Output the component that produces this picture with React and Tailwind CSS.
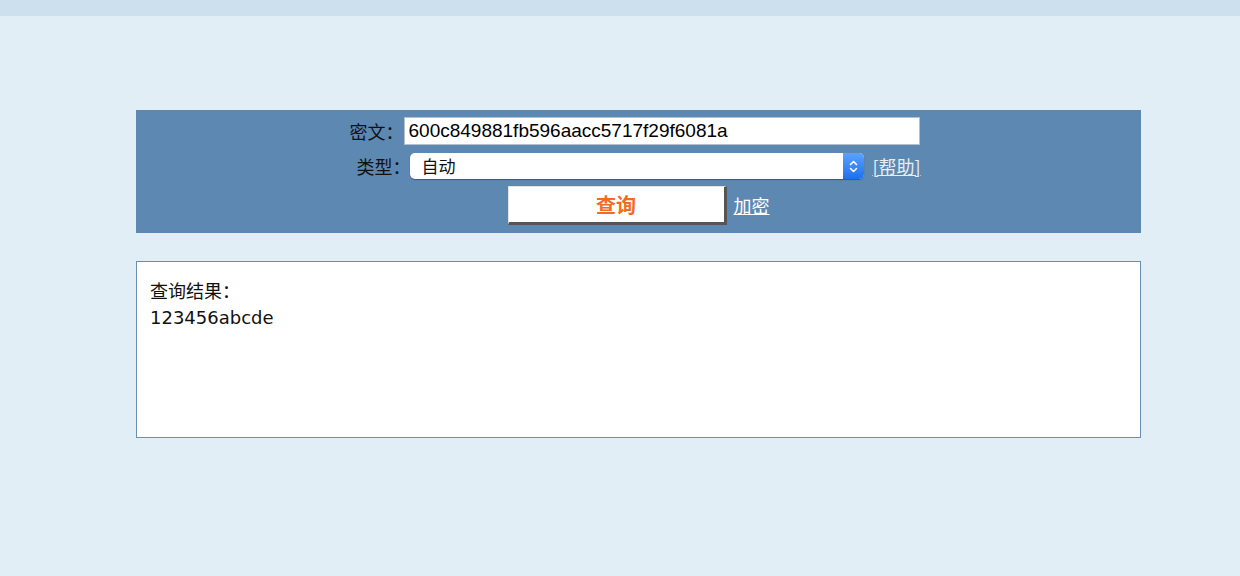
import React, { useState } from "react";

const cjk = "font-['Noto_Sans_CJK_SC',sans-serif]";

export default function App() {
  const [miwen, setMiwen] = useState("600c849881fb596aacc5717f29f6081a");

  return (
    <div className="min-h-[576px] w-full bg-[#e1eef6] font-['Liberation_Sans','Noto_Sans_CJK_SC',sans-serif]">
      <div className="h-4 w-full bg-[#cde0ed]" />

      <div className="ml-[136px] mt-[94px] w-[1005px]">
        {/* formulario */}
        <div className="flex h-[123px] flex-col items-center bg-[#5d88b1] pt-[7px]">
          <div className="flex h-[28px] items-center pr-[8px]">
            <span className={`${cjk} text-[18px] text-[#111]`}>密文：</span>
            <input
              type="text"
              value={miwen}
              onChange={(e) => setMiwen(e.target.value)}
              className="h-[28px] w-[516px] border border-[#b4c0cc] bg-white px-[4px] text-[19px] text-black outline-none"
            />
          </div>

          <div className="mt-[8px] flex h-[26px] items-center">
            <span className={`${cjk} text-[18px] text-[#111]`}>类型：</span>
            <div className="flex h-[26px] w-[454px] items-center rounded-[5px] bg-white shadow-[0_1px_1px_rgba(0,0,0,0.35)]">
              <span className={`${cjk} flex-1 pl-[11px] text-[17px] text-[#111]`}>
                自动
              </span>
              <div className="flex h-[26px] w-[21px] items-center justify-center rounded-r-[5px] bg-gradient-to-b from-[#5aa2fb] to-[#1d6ff0]">
                <svg width="9" height="15" viewBox="0 0 9 15" fill="none">
                  <path
                    d="M1.5 5.5 L4.5 2.5 L7.5 5.5 M1.5 9.5 L4.5 12.5 L7.5 9.5"
                    stroke="white"
                    strokeWidth="1.6"
                    strokeLinecap="round"
                    strokeLinejoin="round"
                  />
                </svg>
              </div>
            </div>
            <a
              href="#"
              className={`${cjk} ml-[8px] text-[18px] text-[#e6edf5] underline`}
            >
              [帮助]
            </a>
          </div>

          <div className="mt-[7px] flex items-center">
            <button
              className={`${cjk} h-[39px] w-[219px] border-t border-l border-b-[3px] border-r-[3px] border-t-[#e4e4e4] border-l-[#e4e4e4] border-b-[#555] border-r-[#555] bg-white text-[20px] font-bold text-[#f26b21]`}
            >
              查询
            </button>
            <a
              href="#"
              className={`${cjk} ml-[7px] text-[18px] text-white underline`}
            >
              加密
            </a>
          </div>
        </div>

        {/* resultado */}
        <div className="mt-[28px] h-[177px] border border-[#6b8fb3] bg-white px-[13px] pt-[14px]">
          <div className={`${cjk} text-[18px] leading-[28px] text-[#111]`}>
            查询结果：
          </div>
          <div className="font-['DejaVu_Sans',sans-serif] text-[18px] leading-[28px] text-[#111]">
            123456abcde
          </div>
        </div>
      </div>
    </div>
  );
}
